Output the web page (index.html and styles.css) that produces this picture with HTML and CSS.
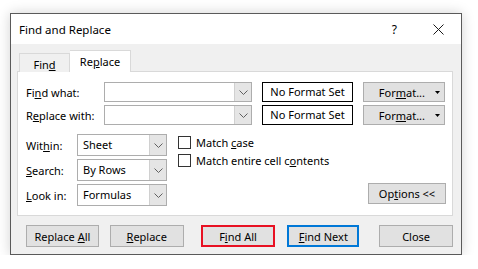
FILE: index.html
```html
<!DOCTYPE html>
<html lang="en">
<head>
  <meta charset="UTF-8">
  <title>Find and Replace</title>
  <link rel="stylesheet" href="styles.css">
</head>
<body>

  <div class="dialog">
    <div class="titlebar">
      <span class="title">Find and Replace</span>
      <span class="help">?</span>
      <svg class="close-x" width="11" height="11" viewBox="0 0 11 11">
        <path d="M0.5 0.5 L10.5 10.5 M10.5 0.5 L0.5 10.5" stroke="#1a1a1a" stroke-width="1" fill="none"/>
      </svg>
    </div>

    <div class="body">
      <div class="tabs">
        <div class="tab">Fin<u>d</u></div>
        <div class="tab active">Re<u>p</u>lace</div>
      </div>

      <div class="panel">
        <div class="find-grid">
          <label>Fi<u>n</u>d what:</label>
          <div class="combo wide">
            <span class="combo-text"></span>
            <span class="combo-arrow"><svg width="9" height="5" viewBox="0 0 9 5"><path d="M0.5 0.5 L4.5 4.5 L8.5 0.5" stroke="#606060" fill="none"/></svg></span>
          </div>
          <div class="format-box">No Format Set</div>
          <button class="btn format-btn"><span>For<u>m</u>at...</span><svg class="caret" width="5" height="3" viewBox="0 0 5 3"><path d="M0 0 L5 0 L2.5 3 Z" fill="#000"/></svg></button>

          <label>R<u>e</u>place with:</label>
          <div class="combo wide">
            <span class="combo-text"></span>
            <span class="combo-arrow"><svg width="9" height="5" viewBox="0 0 9 5"><path d="M0.5 0.5 L4.5 4.5 L8.5 0.5" stroke="#606060" fill="none"/></svg></span>
          </div>
          <div class="format-box">No Format Set</div>
          <button class="btn format-btn"><span>For<u>m</u>at...</span><svg class="caret" width="5" height="3" viewBox="0 0 5 3"><path d="M0 0 L5 0 L2.5 3 Z" fill="#000"/></svg></button>
        </div>

        <div class="options">
          <div class="option-grid">
            <label>Wit<u>h</u>in:</label>
            <div class="combo small">
              <span class="combo-text">Sheet</span>
              <span class="combo-arrow"><svg width="9" height="5" viewBox="0 0 9 5"><path d="M0.5 0.5 L4.5 4.5 L8.5 0.5" stroke="#606060" fill="none"/></svg></span>
            </div>
            <label><u>S</u>earch:</label>
            <div class="combo small">
              <span class="combo-text">By Rows</span>
              <span class="combo-arrow"><svg width="9" height="5" viewBox="0 0 9 5"><path d="M0.5 0.5 L4.5 4.5 L8.5 0.5" stroke="#606060" fill="none"/></svg></span>
            </div>
            <label><u>L</u>ook in:</label>
            <div class="combo small">
              <span class="combo-text">Formulas</span>
              <span class="combo-arrow"><svg width="9" height="5" viewBox="0 0 9 5"><path d="M0.5 0.5 L4.5 4.5 L8.5 0.5" stroke="#606060" fill="none"/></svg></span>
            </div>
          </div>

          <div class="checks">
            <div class="check"><span class="box"></span><span>Match <u>c</u>ase</span></div>
            <div class="check"><span class="box"></span><span>Match entire cell c<u>o</u>ntents</span></div>
          </div>

          <button class="btn options-btn">Op<u>t</u>ions &lt;&lt;</button>
        </div>
      </div>

      <div class="actions">
        <button class="btn action replace-all">Replace <u>A</u>ll</button>
        <button class="btn action replace"><u>R</u>eplace</button>
        <button class="btn action find-all">F<u>i</u>nd All</button>
        <button class="btn action find-next"><u>F</u>ind Next</button>
        <button class="btn action close">Close</button>
      </div>
    </div>
  </div>

</body>
</html>
```

FILE: styles.css
```css
body {
  margin: 0;
  background: #ffffff;
  font-family: 'Noto Sans', 'Open Sans', sans-serif;
  font-size: 11px;
  color: #000;
}

u {
  text-underline-offset: 1px;
}

label {
  white-space: nowrap;
}

.dialog {
  margin: 13px 0 0 10px;
  width: 450px;
  border: 1px solid #5a5a5a;
  background: #f0f0f0;
  box-shadow: 0 0 12px rgba(0, 0, 0, 0.18);
}

.titlebar {
  height: 30px;
  background: #ffffff;
  display: flex;
  align-items: center;
  padding-left: 8px;
}

.title {
  flex: 1;
  font-size: 11.5px;
}

.help {
  font-size: 12px;
  margin-right: 36px;
}

.close-x {
  margin-right: 17px;
}

.body {
  padding: 7px 8px 7px 6px;
}

.tabs {
  display: flex;
  align-items: flex-end;
  margin-left: 2px;
  height: 21px;
  position: relative;
  z-index: 1;
  margin-bottom: -1px;
}

.tab {
  height: 18px;
  width: 49px;
  border: 1px solid #d9d9d9;
  border-bottom: none;
  background: #f0f0f0;
  text-align: center;
  line-height: 21px;
}

.tab.active {
  height: 21px;
  width: 60px;
  background: #ffffff;
  border-left: none;
  line-height: 22px;
}

.panel {
  background: #ffffff;
  border: 1px solid #d9d9d9;
  padding: 10px 6px 9px 8px;
}

.find-grid {
  display: grid;
  grid-template-columns: 68px 148px 91px 82px;
  column-gap: 10px;
  row-gap: 3px;
  align-items: center;
}

.combo {
  display: flex;
  border: 1px solid #adadad;
  background: #ffffff;
  box-sizing: border-box;
}

.combo.wide {
  height: 20px;
}

.combo.small {
  width: 90px;
  height: 22px;
}

.combo-text {
  flex: 1;
  padding-left: 5px;
  line-height: 20px;
}

.combo-arrow {
  width: 16px;
  background: #e5e5e5;
  border-left: 1px solid #d0d0d0;
  display: flex;
  align-items: center;
  justify-content: center;
}

.format-box {
  height: 20px;
  border: 1px solid #000;
  box-sizing: border-box;
  text-align: center;
  line-height: 18px;
}

.btn {
  font-family: inherit;
  font-size: 11px;
  color: #000;
  background: #e1e1e1;
  border: 1px solid #adadad;
  box-sizing: border-box;
  padding: 0;
}

.format-btn {
  height: 20px;
  display: flex;
  align-items: center;
  justify-content: flex-end;
  padding-right: 4px;
}

.caret {
  margin-left: 10px;
}

.options {
  display: flex;
  align-items: flex-start;
  margin-top: 9px;
}

.option-grid {
  display: grid;
  grid-template-columns: 51px 90px;
  row-gap: 3px;
  align-items: center;
}

.checks {
  margin-left: 11px;
  padding-top: 2px;
  display: flex;
  flex-direction: column;
  gap: 5px;
}

.check {
  display: flex;
  align-items: center;
  height: 13px;
}

.box {
  width: 11px;
  height: 11px;
  border: 1px solid #333;
  background: #fff;
  margin-right: 5px;
}

.options-btn {
  margin-left: auto;
  margin-top: 49px;
  width: 78px;
  height: 21px;
}

.actions {
  display: flex;
  margin-top: 9px;
  padding-left: 9px;
}

.action {
  height: 22px;
}

.replace-all {
  width: 73px;
}

.replace {
  width: 74px;
  margin-left: 11px;
}

.find-all {
  width: 75px;
  margin-left: 17px;
  border: 2px solid #e81123;
}

.find-next {
  width: 72px;
  margin-left: 12px;
  border: 2px solid #0078d7;
}

.close {
  width: 74px;
  margin-left: 20px;
}
```
